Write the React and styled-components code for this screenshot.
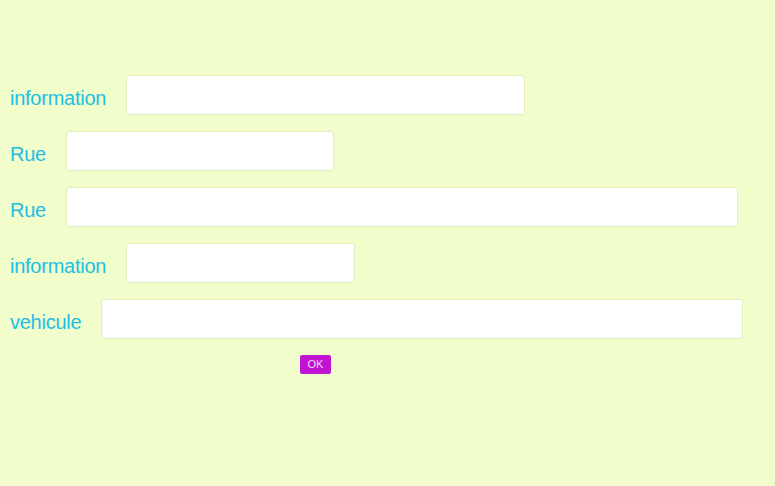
import React from "react";
import styled, { createGlobalStyle } from "styled-components";

const GlobalStyle = createGlobalStyle`
  html, body {
    margin: 0;
    padding: 0;
    background: #f1fdca;
  }
  body {
    font-family: "Liberation Sans", Arial, sans-serif;
  }
`;

const Page = styled.div`
  width: 775px;
  height: 486px;
  background: #f1fdca;
  box-sizing: border-box;
  padding: 75px 0 0 10px;
`;

const Form = styled.form`
  display: flex;
  flex-direction: column;
  gap: 16px;
`;

const Row = styled.div`
  display: flex;
  align-items: center;
  gap: 20px;
  height: 40px;
`;

const Label = styled.label`
  font-size: 20px;
  letter-spacing: -0.25px;
  color: #1dc0e4;
  line-height: 1;
  padding-top: 6px;
`;

const Field = styled.input`
  box-sizing: border-box;
  width: ${({ $w }) => $w}px;
  height: 40px;
  border: 1px solid #e3efbe;
  border-radius: 3px;
  background: #ffffff;
  outline: none;
`;

const Actions = styled.div`
  display: flex;
  padding-left: 290px;
`;

const Button = styled.button`
  width: 31px;
  height: 19px;
  padding: 0;
  border: none;
  border-radius: 2px;
  background: #c114d2;
  color: #f6d9f8;
  font-family: "Liberation Sans", Arial, sans-serif;
  font-size: 11px;
  line-height: 19px;
  cursor: pointer;
`;

const fields = [
  { label: "information", width: 399 },
  { label: "Rue", width: 268 },
  { label: "Rue", width: 672 },
  { label: "information", width: 229 },
  { label: "vehicule", width: 642 },
];

const App = () => {
  return (
    <Page>
      <GlobalStyle />
      <Form onSubmit={(e) => e.preventDefault()}>
        {fields.map((f, i) => (
          <Row key={i}>
            <Label>{f.label}</Label>
            <Field $w={f.width} />
          </Row>
        ))}
        <Actions>
          <Button type="submit">OK</Button>
        </Actions>
      </Form>
    </Page>
  );
};

export default App;
